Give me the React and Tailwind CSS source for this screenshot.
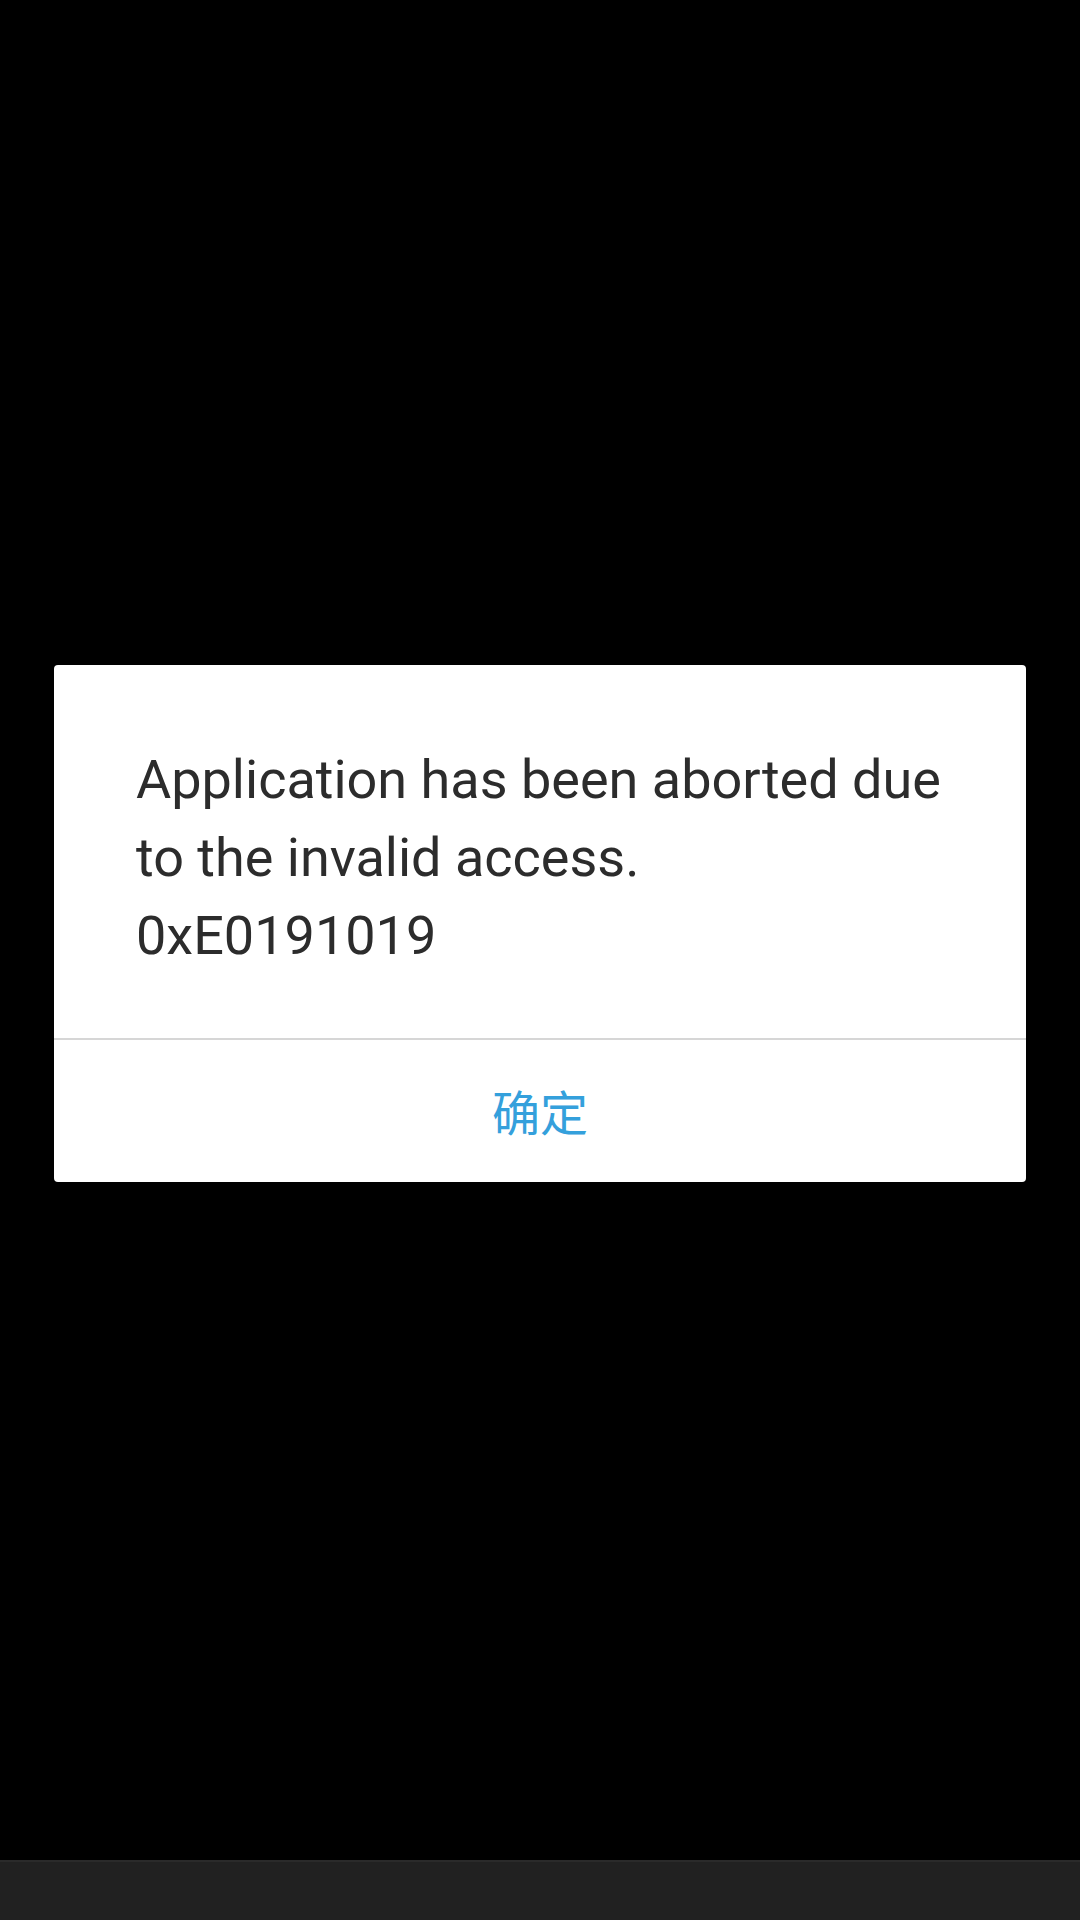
export default function App() {
  return (
    <div className="w-[1080px] h-[1920px] bg-black flex flex-col" style={{ fontFamily: 'Roboto, "Noto Sans CJK SC", sans-serif' }}>
      <div className="flex-1 flex items-center justify-center pb-[14px]">
        <div className="w-[972px] bg-white rounded-[4px] flex flex-col">
          <div className="pl-[82px] pr-[70px] pt-[76px] pb-[63px] text-[54px] leading-[78px] text-[#2c2c2c]">
            Application has been aborted due to the invalid access.
            <br />
            0xE0191019
          </div>
          <div className="h-[2px] bg-[#d6d6d6]" />
          <div className="h-[142px] flex items-center justify-center pb-[2px] text-[48px] text-[#34a0dc]" style={{ fontFamily: '"Noto Sans CJK SC", sans-serif' }}>
            确定
          </div>
        </div>
      </div>
      <div className="h-[60px] bg-[#212121] border-t-[2px] border-[#2a2a2a]" />
    </div>
  );
}
